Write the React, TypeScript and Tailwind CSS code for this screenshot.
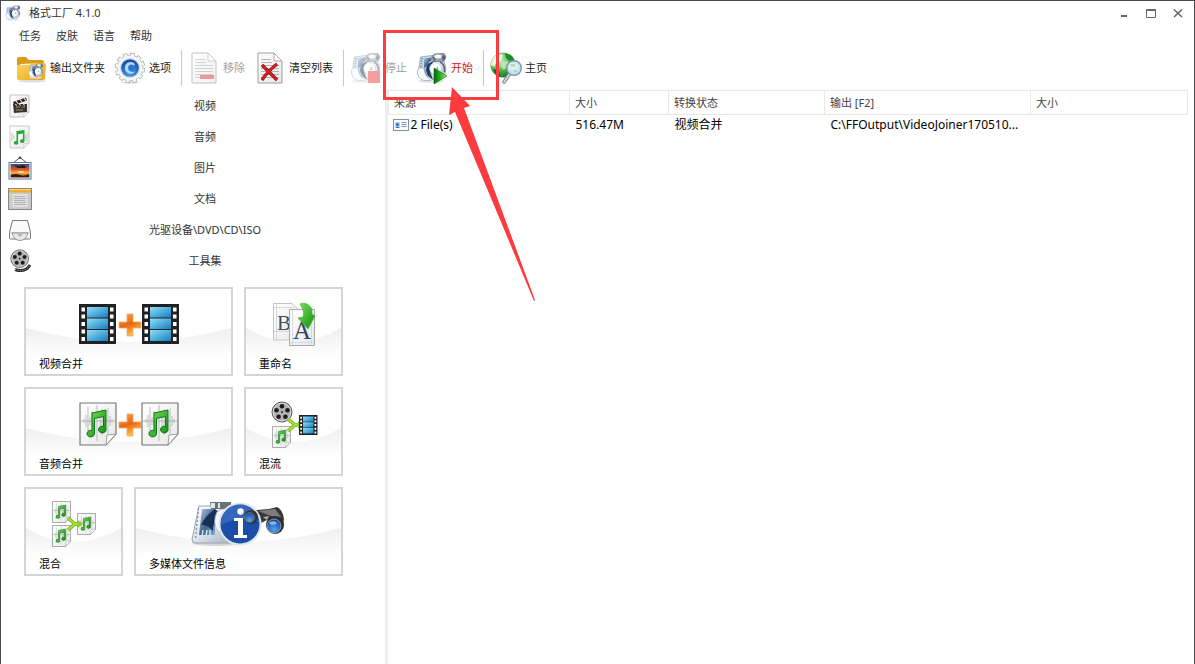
import React from "react";

interface IconProps {
  className?: string;
}

interface PartProps {
  transform?: string;
}

// gradients used by several icons, rendered once per page
function SharedDefs() {
  return (
    <svg className="absolute h-0 w-0" aria-hidden="true">
      <defs>
        <linearGradient id="filmBlue" x1="0" y1="0" x2="1" y2="1">
          <stop offset="0" stopColor="#9adcf5" />
          <stop offset="0.5" stopColor="#4eb0dd" />
          <stop offset="1" stopColor="#1a7db8" />
        </linearGradient>
        <linearGradient id="orange" x1="0" y1="0" x2="0.4" y2="1">
          <stop offset="0" stopColor="#f9a45c" />
          <stop offset="0.45" stopColor="#ee7420" />
          <stop offset="0.55" stopColor="#e8650f" />
          <stop offset="1" stopColor="#fbc04a" />
        </linearGradient>
        <linearGradient id="paper" x1="0" y1="0" x2="1" y2="1">
          <stop offset="0" stopColor="#ffffff" />
          <stop offset="1" stopColor="#e8e8e8" />
        </linearGradient>
        <linearGradient id="green" x1="0" y1="0" x2="1" y2="1">
          <stop offset="0" stopColor="#7be05a" />
          <stop offset="1" stopColor="#118a12" />
        </linearGradient>
        <linearGradient id="play" x1="0" y1="0" x2="1" y2="0">
          <stop offset="0" stopColor="#04660a" />
          <stop offset="0.5" stopColor="#27b526" />
          <stop offset="1" stopColor="#a4ec7c" />
        </linearGradient>
        <linearGradient id="folder" x1="0" y1="0" x2="1" y2="1">
          <stop offset="0" stopColor="#ffd75e" />
          <stop offset="1" stopColor="#e9a51b" />
        </linearGradient>
        <linearGradient id="metal" x1="0" y1="0" x2="1" y2="1">
          <stop offset="0" stopColor="#ffffff" />
          <stop offset="0.5" stopColor="#dce3ea" />
          <stop offset="1" stopColor="#a3afbd" />
        </linearGradient>
        <linearGradient id="steel" x1="0" y1="0" x2="1" y2="1">
          <stop offset="0" stopColor="#b4cbe4" />
          <stop offset="0.55" stopColor="#3f6490" />
          <stop offset="1" stopColor="#8eadd0" />
        </linearGradient>
        <radialGradient id="blueBall" cx="0.5" cy="0.75" r="0.7">
          <stop offset="0" stopColor="#4fa5f0" />
          <stop offset="1" stopColor="#134a9f" />
        </radialGradient>
        <radialGradient id="globe" cx="0.35" cy="0.3" r="0.8">
          <stop offset="0" stopColor="#e0fad6" />
          <stop offset="0.5" stopColor="#52b850" />
          <stop offset="1" stopColor="#0c6a1f" />
        </radialGradient>
        <radialGradient id="lens" cx="0.4" cy="0.4" r="0.7">
          <stop offset="0" stopColor="#ffffff" />
          <stop offset="1" stopColor="#a5d6ea" />
        </radialGradient>
        <linearGradient id="sunset" x1="0" y1="0" x2="0" y2="1">
          <stop offset="0" stopColor="#3a4c80" />
          <stop offset="0.4" stopColor="#e0512a" />
          <stop offset="0.65" stopColor="#ffb53a" />
          <stop offset="1" stopColor="#7a2418" />
        </linearGradient>
        <linearGradient id="wave" x1="0" y1="0" x2="0" y2="1">
          <stop offset="0" stopColor="#efefef" />
          <stop offset="0.3" stopColor="#f6f6f6" />
          <stop offset="0.6" stopColor="#ffffff" />
        </linearGradient>
      </defs>
    </svg>
  );
}

/* ---------- shared drawing parts ---------- */

// 32x32
function Machine({ transform }: PartProps) {
  return (
    <g transform={transform}>
      <ellipse cx="15" cy="29" rx="13" ry="1.8" fill="#e1e4e8" />
      {/* film frame behind */}
      <path d="M4.500 5 L16 3.500 L18 24 L8 26 L2 22Z" fill="#c9d6e4" stroke="#97a5b5" strokeWidth="0.8" />
      <path d="M6 6 L4.500 18" stroke="#6f8094" strokeWidth="1.4" strokeDasharray="1.3 1.3" />
      <path d="M8 6.500 L15.500 5.500 L15.500 12 L8 16Z" fill="url(#steel)" />
      {/* housing */}
      <path d="M13 10 Q20 6 28 9.500 Q31 15 29 22 Q24 28 16 27Z" fill="url(#metal)" stroke="#8a98a8" strokeWidth="0.8" />
      <path d="M24 10 Q29 12 28.500 20" fill="none" stroke="#55677c" strokeWidth="1.6" />
      <path d="M1.500 18 Q5 14 8 17 Q9 24 15 28.500 H8 Q1 27 1.500 18Z" fill="#f7f9fb" stroke="#a2aebb" strokeWidth="0.8" />
      {/* dark blade */}
      <path d="M18.500 8.500 Q11 11 10 17 Q10 24 17 27.500 Q14 22 14 18 Q14.500 13 18.500 8.500Z" fill="#1f3c62" />
      <path d="M9 15 Q8 20 12 25" fill="none" stroke="#7f9cbd" strokeWidth="1.2" />
      {/* disc */}
      <circle cx="19.500" cy="16.500" r="5.800" fill="#ffffff" stroke="#c3ccd5" strokeWidth="0.7" />
      <path d="M19 18 L22 14 L22.500 18Z" fill="#8fb3a4" />
      {/* camera head */}
      <path d="M16 4 L19 2 L28 1.500 L30 5 L28 9 L18 9.500Z" fill="#9aa6b2" stroke="#5f6c79" strokeWidth="0.8" />
      <ellipse cx="22" cy="4.500" rx="3.500" ry="1.900" fill="#f2f5f8" />
      <ellipse cx="27.500" cy="5.500" rx="1.500" ry="2.500" fill="#4f5e6e" />
      <path d="M17.500 5 L19 8.500" stroke="#4f5e6e" strokeWidth="1.200" />
    </g>
  );
}

// 38x43
function Film({ transform }: PartProps) {
  const holes = [3.5, 10.5, 18, 25.5, 33];
  return (
    <g transform={transform}>
      <rect width="37" height="40" fill="#1f2123" />
      <rect x="8" y="3" width="21" height="10.5" fill="url(#filmBlue)" />
      <rect x="8" y="14.5" width="21" height="10.5" fill="url(#filmBlue)" />
      <rect x="8" y="26" width="21" height="11" fill="url(#filmBlue)" />
      {holes.map((y) => (
        <g key={y} fill="#fff">
          <rect x="2.5" y={y} width="3.5" height="4" />
          <rect x="31" y={y} width="3.5" height="4" />
        </g>
      ))}
    </g>
  );
}

function Plus({ transform }: PartProps) {
  return (
    <path
      transform={transform}
      d="M8 0 h6 v8 h8 v6 h-8 v8 h-6 v-8 h-8 v-6 h8z"
      fill="url(#orange)"
      stroke="#f3a76a"
      strokeWidth="0.8"
    />
  );
}

// 38x44
function MusicDoc({ transform }: PartProps) {
  return (
    <g transform={transform}>
      <path d="M1 1 H37 V32 L27 43 H1Z" fill="url(#paper)" stroke="#777" strokeWidth="1.2" />
      <path
        d="M5 17v4M7 13v12M9 5v29M11 15v8M13 9v18M15 12v14M18 3v36M21 13v13M23 7v26M26 10v19M29 6v26M31 14v10M33 17v4"
        stroke="#bcbcbc"
        strokeWidth="1"
      />
      <path d="M2 19 H36" stroke="#aaa" strokeWidth="0.8" />
      <path d="M37 32 L27 43 L28 33Z" fill="#fff" stroke="#888" strokeWidth="0.8" />
      <path
        d="M13 11 L27 8 V27 A3.800 3.300 0 1 1 24.500 24.500 V14.500 L15.500 16.500 V31 A3.800 3.300 0 1 1 13 28.500Z"
        fill="url(#green)"
        stroke="#0b7714"
        strokeWidth="1"
      />
    </g>
  );
}

// 24x24
function Reel({ transform }: PartProps) {
  return (
    <g transform={transform}>
      <circle cx="11" cy="11" r="10" fill="#b4b4b4" stroke="#5a5a5a" strokeWidth="1" />
      <circle cx="11" cy="11" r="8.8" fill="none" stroke="#dedede" strokeWidth="0.8" />
      <g fill="#1c1c1c">
        <circle cx="11" cy="5.2" r="2.3" />
        <circle cx="16.5" cy="9.2" r="2.3" />
        <circle cx="14.4" cy="15.7" r="2.3" />
        <circle cx="7.6" cy="15.7" r="2.3" />
        <circle cx="5.5" cy="9.2" r="2.3" />
        <circle cx="11" cy="11" r="1" />
      </g>
    </g>
  );
}

function MergeArrow({ transform }: PartProps) {
  return (
    <g transform={transform}>
      <path d="M1 1 L8 7 L13 7 M8 7 L1 13" fill="none" stroke="#6cae12" strokeWidth="3.6" />
      <path d="M1 1 L8 7 L13 7 M8 7 L1 13" fill="none" stroke="#a6dc3c" strokeWidth="2.2" />
      <path d="M11 3 L16 7 L11 11Z" fill="#8ccc26" />
    </g>
  );
}

/* ---------- toolbar icons ---------- */

function FolderIcon({ className }: IconProps) {
  return (
    <svg className={className} viewBox="0 0 32 32">
      <ellipse cx="17" cy="29" rx="14" ry="1.5" fill="#ddd" />
      <path d="M2 7 q0-2 2-2 h7 l3 3 h13 q2 0 2 2 v15 q0 2-2 2 H4 q-2 0-2-2z" fill="#dd9c17" />
      <path d="M5 12 l23-1 v4 H5z" fill="#fff6d8" />
      <path d="M2 13 h12 l3-2 h12 q2 0 2 2 l-1 13 q0 2-2 2 H4 q-2 0-2-2z" fill="url(#folder)" />
      <Machine transform="translate(13 11) scale(0.5)" />
    </svg>
  );
}

function GearIcon({ className }: IconProps) {
  return (
    <svg className={className} viewBox="0 0 32 32">
      <ellipse cx="16" cy="30.5" rx="9" ry="1.2" fill="#ddd" />
      <circle cx="16" cy="16" r="13.6" fill="none" stroke="#999ea3" strokeWidth="3.2" strokeDasharray="4.200 2.903" />
      <circle cx="16" cy="16" r="13" fill="#f6f6f6" stroke="#a9adb1" strokeWidth="0.8" />
      <circle cx="16" cy="16" r="13.4" fill="none" stroke="#f6f6f6" strokeWidth="2.4" strokeDasharray="3.200 3.816" strokeDashoffset="-0.500" />
      <circle cx="16" cy="16" r="9.5" fill="#dbe6f2" stroke="#b0bfd0" strokeWidth="0.6" />
      <circle cx="16" cy="16" r="8.8" fill="url(#blueBall)" />
      <path
        d="M20 11 Q14 8.500 11.500 13 Q9.500 18 14 21 Q18 23 21 19.500 Q17 21 14.700 18.500 Q12.800 15.500 15.500 13 Q18 11.500 20.500 14 Q21 12 20 11Z"
        fill="#b7d9f8"
      />
      <circle cx="17.800" cy="16" r="2.600" fill="#2877cf" />
    </svg>
  );
}

function PageBase() {
  return (
    <g>
      <path d="M4 1 H20 L28 9 V31 H4Z" fill="url(#paper)" stroke="#9d9d9d" strokeWidth="1" />
      <path d="M20 1 V9 H28Z" fill="#fff" stroke="#9d9d9d" strokeWidth="0.8" />
      <path
        d="M7 7.5H17M7 10.5H18M7 13.5H25M7 16.5H25M7 19.5H25M7 22.5H25M7 25.5H25"
        stroke="#b5b5b5"
        strokeWidth="1"
      />
    </g>
  );
}

function RemoveIcon({ className }: IconProps) {
  return (
    <svg className={className} viewBox="0 0 32 32">
      <g opacity="0.6">
        <PageBase />
        <rect x="12" y="23" width="14" height="4" fill="#de5555" />
      </g>
    </svg>
  );
}

function ClearIcon({ className }: IconProps) {
  return (
    <svg className={className} viewBox="0 0 32 32">
      <PageBase />
      <path d="M8 13 L23 28 M23 12 Q14 19 8 28" fill="none" stroke="#8e0a10" strokeWidth="3.2" />
      <path d="M8 13 L23 28 M23 12 Q14 19 8 28" fill="none" stroke="#d3222a" strokeWidth="2" />
    </svg>
  );
}

function StopIcon({ className }: IconProps) {
  return (
    <svg className={className} viewBox="0 0 32 32">
      <g opacity="0.5">
        <Machine />
        <rect x="18" y="19" width="12" height="12" fill="#ee3d3d" />
      </g>
    </svg>
  );
}

function StartIcon({ className }: IconProps) {
  return (
    <svg className={className} viewBox="0 0 32 32">
      <Machine />
      <path d="M18 16 L31 24 L18 32Z" fill="url(#play)" stroke="#0b6b10" strokeWidth="0.6" />
    </svg>
  );
}

function HomeIcon({ className }: IconProps) {
  return (
    <svg className={className} viewBox="0 0 32 32">
      <circle cx="13" cy="13" r="12.5" fill="url(#globe)" />
      <path d="M5 4 Q10 1 13 3 L11 8 L7 10 L4 15 L1 13 Q1 8 5 4Z" fill="#f1fbed" opacity="0.9" />
      <path d="M15 1 L22 4 L25 9 L20 9 L16 6Z" fill="#1c8a32" />
      <path d="M12 10 L18 9 L19 13 L14 18 L11 15Z" fill="#c5eeb9" opacity="0.8" />
      <path d="M3 17 L9 18 L10 25 Q5 23 3 17Z" fill="#0d6a1f" />
      <path d="M19.500 22 L14 30" stroke="#73808c" strokeWidth="3.6" strokeLinecap="round" />
      <path d="M19.500 22 L14 30" stroke="#d3dae0" strokeWidth="1.8" strokeLinecap="round" />
      <circle cx="24" cy="16" r="7.3" fill="url(#lens)" fillOpacity="0.95" stroke="#7e95a5" strokeWidth="1.4" />
      <path d="M20 12 h5 v3 h-4z M23 18 h4 v2 h-3z" fill="#8fd09a" opacity="0.6" />
    </svg>
  );
}

/* ---------- category icons (24x24) ---------- */

function VideoIcon({ className }: IconProps) {
  return (
    <svg className={className} viewBox="0 0 24 24">
      <path d="M2 1 H21 V18 L16 23 H2Z" fill="url(#paper)" stroke="#c4c4c4" strokeWidth="1" />
      <path d="M5 8 L18 3.500 L19 6.500 L6 11Z" fill="#2c2521" />
      <path d="M8 7 l2 2.500 M12 5.500 l2 2.500 M16 4.200 l2 2.500" stroke="#ddd" strokeWidth="1.2" />
      <path d="M5 10 H19 V18 L6 19Z" fill="#3d342e" />
      <path d="M8 13h4M8 16h7M14 13h3" stroke="#9b8b7c" strokeWidth="1" />
      <path d="M7 10 l2 1.500 M11 10 l2 1.500 M15 10 l2 1.500" stroke="#ddd" strokeWidth="1" />
      <path d="M21 18 L16 23 L16 19Z" fill="#fff" stroke="#bbb" strokeWidth="0.6" />
    </svg>
  );
}

function AudioIcon({ className }: IconProps) {
  return (
    <svg className={className} viewBox="0 0 24 24">
      <path d="M2 1 H21 V18 L16 23 H2Z" fill="url(#paper)" stroke="#c8c8c8" strokeWidth="1" />
      <path d="M4 8v8M6 10v4M17.500 10v4M19 8v8" stroke="#c9c9c9" strokeWidth="1" />
      <path
        d="M8.500 6 L16.500 5 V16 A2.200 1.900 0 1 1 14.900 14.300 V8.500 L10.100 9.200 V17.500 A2.200 1.900 0 1 1 8.500 16Z"
        fill="#25a935"
      />
      <path d="M21 18 L16 23 L16 19Z" fill="#fff" stroke="#bbb" strokeWidth="0.6" />
    </svg>
  );
}

function PictureIcon({ className }: IconProps) {
  return (
    <svg className={className} viewBox="0 0 24 24">
      <path d="M5 7 L12 1.500 L19 7" fill="none" stroke="#555" strokeWidth="1" />
      <circle cx="12" cy="1.700" r="1.200" fill="#444" />
      <rect x="1" y="6.500" width="22" height="16.500" fill="#f4f8fb" stroke="#4e7a9e" strokeWidth="1" />
      <rect x="2.500" y="8" width="19" height="13.500" fill="url(#sunset)" />
      <path d="M5 9 l6 1 l4-1 l4 2 l-3 1 l-6 0z" fill="#191c30" />
      <path d="M3 19 q5-2 9 0 t9-1 v3 H3z" fill="#3a1616" />
      <path d="M10.500 16 h5" stroke="#fff3a2" strokeWidth="1.6" />
    </svg>
  );
}

function DocumentIcon({ className }: IconProps) {
  return (
    <svg className={className} viewBox="0 0 24 24">
      <rect x="0.500" y="1.500" width="23" height="21" fill="#c9ccce" stroke="#858585" strokeWidth="1" />
      <rect x="1" y="2" width="22" height="3.500" fill="#f1ae2e" />
      <path d="M1 2.500h22" stroke="#ffd676" strokeWidth="1" />
      <rect x="4.500" y="7" width="15" height="13" fill="#e0e0e0" />
      <path d="M6 9.500h11M6 11.500h12M6 13.500h11M6 15.500h12M6 17.500h12" stroke="#adadad" strokeWidth="0.900" />
    </svg>
  );
}

function DriveIcon({ className }: IconProps) {
  return (
    <svg className={className} viewBox="0 0 24 24">
      <path
        d="M4.500 2.500 H19.500 L22.500 14 V20 Q22.500 21 21.500 21 H2.500 Q1.500 21 1.500 20 V14Z"
        fill="#fafafa"
        stroke="#777"
        strokeWidth="1"
      />
      <path d="M1.500 14.500 H22.500" stroke="#c5c5c5" strokeWidth="0.800" />
      <path d="M4 15 H20 Q18 22.500 12 22.500 Q6 22.500 4 15Z" fill="#e8e8e8" stroke="#8b8b8b" strokeWidth="0.900" />
      <path d="M9.500 15.500 H14.500 Q14 18.500 12 18.500 Q10 18.500 9.500 15.500Z" fill="#b5b5b5" />
    </svg>
  );
}

function ToolsetIcon({ className }: IconProps) {
  return (
    <svg className={className} viewBox="0 0 24 24">
      <path d="M7 20.500 Q17 24 22 16" fill="none" stroke="#2c2c2c" strokeWidth="3" />
      <path d="M7 20.500 Q17 24 22 16" fill="none" stroke="#bbb" strokeWidth="1" strokeDasharray="1 1.500" />
      <Reel transform="translate(2 0) scale(0.88)" />
    </svg>
  );
}

/* ---------- tile pictures ---------- */

function VideoJoinArt() {
  return (
    <svg className="h-12 w-[102px]" viewBox="0 0 102 48">
      <Film transform="translate(1 4)" />
      <Plus transform="translate(41 14)" />
      <Film transform="translate(64 4)" />
    </svg>
  );
}

function AudioJoinArt() {
  return (
    <svg className="h-12 w-[102px]" viewBox="0 0 102 48">
      <MusicDoc transform="translate(1 2)" />
      <Plus transform="translate(41 14)" />
      <MusicDoc transform="translate(63 2)" />
    </svg>
  );
}

function RenameArt() {
  return (
    <svg className="h-12 w-12" viewBox="0 0 48 48">
      <path d="M3.500 3.500 H22 L28 9 V40 H3.500Z" fill="url(#paper)" stroke="#c4c4c4" strokeWidth="1" />
      <path d="M6.500 4 V40 M4 7.500 H24 M4 31.500 H24" stroke="#d9d9d9" strokeWidth="1" />
      <text x="7" y="30" fontSize="21" fontFamily="Liberation Serif, serif" fill="#3e5266">
        B
      </text>
      <path d="M19.500 9.500 H44.500 V45.500 H19.500Z" fill="url(#paper)" stroke="#a9a9a9" strokeWidth="1" />
      <path d="M22.500 10 V45 M41.500 10 V45 M20 42.500 H44" stroke="#dadada" strokeWidth="1" />
      <text x="23" y="39" fontSize="25" fontFamily="Liberation Serif, serif" fill="#33475b">
        A
      </text>
      <path
        d="M30 4 Q37 1 42 9 L42 14 L45 16 L38 29 L28 18 L33 17 Q35 11 30 4Z"
        fill="url(#green)"
        stroke="#4fc040"
        strokeWidth="0.800"
      />
    </svg>
  );
}

function MuxArt() {
  return (
    <svg className="h-12 w-12" viewBox="0 0 48 48">
      <Reel transform="translate(1 1)" />
      <MusicDoc transform="translate(2 26) scale(0.5)" />
      <MergeArrow transform="translate(17 18)" />
      <Film transform="translate(29 15) scale(0.5)" />
    </svg>
  );
}

function MixArt() {
  return (
    <svg className="h-12 w-12" viewBox="0 0 48 48">
      <MusicDoc transform="translate(2 1) scale(0.5)" />
      <MusicDoc transform="translate(2 25) scale(0.5)" />
      <MusicDoc transform="translate(27 13) scale(0.5)" />
      <MergeArrow transform="translate(17 17)" />
    </svg>
  );
}

function MediaInfoArt() {
  return (
    <svg className="h-12 w-24" viewBox="0 0 96 48">
      <ellipse cx="26" cy="43" rx="25" ry="3" fill="#d5d5d5" />
      <path
        d="M8 6 H38 L44 40 Q44 43 40 43 H5 Q1 43 1 39 L3 30Z"
        fill="url(#metal)"
        stroke="#9aa4ae"
        strokeWidth="1"
      />
      <path d="M11 9 H24 V35 H8Z" fill="url(#steel)" />
      <path d="M7.500 8 L4.500 38" stroke="#8c98a4" strokeWidth="1.500" strokeDasharray="2 2" />
      <path d="M24 9 Q14 16 10 25 Q16 24 22 31 Q21 22 30 14Z" fill="#18305a" />
      <path d="M11 36 l1-6 M15 36 l1-6 M19 36 v-6" stroke="#d6e6f5" strokeWidth="1.400" />
      <path d="M19 2 H40 V9 H20Z" fill="#69727b" />
      <path d="M20 3 h4 v5 h-4z M27 3 h2 v5 h-2z" fill="#e3e8ec" />
      <path d="M26 12 Q34 6 40 12 V36 L27 31 Q21 22 26 12Z" fill="#f6f8fa" stroke="#b4bdc6" strokeWidth="0.800" />
      {/* binoculars */}
      <path d="M58 12 Q60 9 66 10 L78 9 L86 7 Q92 10 93 19 L91 29 L86 31 L76 20 L66 25Z" fill="#383838" />
      <path d="M67 11 L84 9 L90 17 L80 16Z" fill="#7d7d7d" />
      <path d="M72 17 L78 16 L76 20Z" fill="#aaa" />
      <circle cx="49" cy="24" r="20.500" fill="#1c4da8" stroke="#dfe5ee" strokeWidth="2" />
      <path d="M30 25 A19 19 0 0 1 68 22 Q49 15 30 25Z" fill="#4d7fd0" opacity="0.5" />
      <circle cx="49.500" cy="11.500" r="3.200" fill="#fff" />
      <path d="M43 18 H52 V35 H56 V38 H43 V35 H47 V21 H43Z" fill="#fff" />
      <circle cx="60" cy="17" r="7" fill="#343434" />
      <circle cx="58.500" cy="17.500" r="4.800" fill="url(#blueBall)" stroke="#999" strokeWidth="0.600" />
      <circle cx="84" cy="25" r="9" fill="#2d2d2d" />
      <circle cx="83" cy="26" r="7" fill="url(#blueBall)" stroke="#aaa" strokeWidth="0.800" />
      <ellipse cx="82" cy="23" rx="3.500" ry="1.800" fill="#9bc9f5" opacity="0.8" />
    </svg>
  );
}

/* ---------- data ---------- */

const MENUS = ["任务", "皮肤", "语言", "帮助"];

interface ToolItem {
  label: string;
  Icon: React.FC<IconProps>;
  disabled?: boolean;
  active?: boolean;
}

const TOOL_GROUPS: ToolItem[][] = [
  [
    { label: "输出文件夹", Icon: FolderIcon },
    { label: "选项", Icon: GearIcon },
  ],
  [
    { label: "移除", Icon: RemoveIcon, disabled: true },
    { label: "清空列表", Icon: ClearIcon },
  ],
  [
    { label: "停止", Icon: StopIcon, disabled: true },
    { label: "开始", Icon: StartIcon, active: true },
  ],
  [{ label: "主页", Icon: HomeIcon }],
];

const CATEGORIES: ToolItem[] = [
  { label: "视频", Icon: VideoIcon },
  { label: "音频", Icon: AudioIcon },
  { label: "图片", Icon: PictureIcon },
  { label: "文档", Icon: DocumentIcon },
  { label: "光驱设备\\DVD\\CD\\ISO", Icon: DriveIcon },
  { label: "工具集", Icon: ToolsetIcon },
];

const TILES = [
  { label: "视频合并", Art: VideoJoinArt, wide: true },
  { label: "重命名", Art: RenameArt, wide: false },
  { label: "音频合并", Art: AudioJoinArt, wide: true },
  { label: "混流", Art: MuxArt, wide: false },
  { label: "混合", Art: MixArt, wide: false },
  { label: "多媒体文件信息", Art: MediaInfoArt, wide: true },
];

/* ---------- layout ---------- */

function TitleBar() {
  return (
    <header className="flex h-6 items-center pl-1 pr-[10px]">
      <svg className="h-4 w-4" viewBox="0 0 32 32">
        <Machine />
      </svg>
      <h1 className="ml-2 flex-1">格式工厂 4.1.0</h1>
      <div className="flex items-center gap-[15px] text-[#666]">
        <button type="button" aria-label="最小化">
          <svg className="h-3 w-3" viewBox="0 0 12 12">
            <path d="M3 9 H9" stroke="currentColor" strokeWidth="2" />
          </svg>
        </button>
        <button type="button" aria-label="最大化">
          <svg className="h-3 w-3" viewBox="0 0 12 12">
            <path d="M1.500 2.500 H10.500 V10.500 H1.500Z M1.500 3.500 H10.500" fill="none" stroke="currentColor" />
          </svg>
        </button>
        <button type="button" aria-label="关闭">
          <svg className="h-3 w-3" viewBox="0 0 12 12">
            <path d="M2 2.500 L10 10 M10 2.500 L2 10" stroke="currentColor" strokeWidth="1.600" />
          </svg>
        </button>
      </div>
    </header>
  );
}

function ToolButton({ label, Icon, disabled, active }: ToolItem) {
  const color = disabled ? "text-[#a0a0a0]" : active ? "text-[#c8231c]" : "text-[#222]";
  return (
    <button type="button" disabled={disabled} className={`flex items-center gap-[3px] ${color}`}>
      <Icon className="h-8 w-8" />
      {label}
    </button>
  );
}

function Toolbar() {
  return (
    <div className="mt-[3px] flex h-9 pl-2">
      {TOOL_GROUPS.map((group, i) => (
        <div
          key={i}
          className="flex items-center gap-[9px] border-r border-[#c8c8c8] pl-[6px] pr-[10px] last:border-r-0"
        >
          {group.map((item) => (
            <ToolButton key={item.label} {...item} />
          ))}
        </div>
      ))}
    </div>
  );
}

function Tile({ label, Art, wide }: (typeof TILES)[number]) {
  return (
    <button
      type="button"
      className={`relative flex h-[89px] flex-col items-start border-2 border-[#d5d5d5] bg-white pt-[11px] text-black ${
        wide ? "col-span-2" : ""
      }`}
    >
      <svg className="absolute inset-0 h-full w-full" viewBox="0 0 100 85" preserveAspectRatio="none">
        <path d="M0 39 Q50 67 100 39 V85 H0Z" fill="url(#wave)" />
      </svg>
      <span className="relative flex w-full justify-center">
        <Art />
      </span>
      <span className="relative mt-2 pl-[13px] leading-4">{label}</span>
    </button>
  );
}

function Sidebar() {
  return (
    <aside className="w-[387px] shrink-0 border-r-3 border-[#eee]">
      <nav>
        {CATEGORIES.map(({ label, Icon }) => (
          <button key={label} type="button" className="flex h-[31px] w-full items-center px-[7px]">
            <Icon className="h-6 w-6" />
            <span className="flex-1">{label}</span>
          </button>
        ))}
      </nav>
      <div className="mt-[11px] grid grid-cols-[repeat(3,99px)] gap-[11px] pl-[23px]">
        {TILES.map((tile) => (
          <Tile key={tile.label} {...tile} />
        ))}
      </div>
    </aside>
  );
}

function TaskTable() {
  return (
    <main className="min-w-0 flex-1 pr-[6px]">
      <table className="w-full table-fixed border-collapse text-left">
        <colgroup>
          <col className="w-[181px]" />
          <col className="w-[99px]" />
          <col className="w-[156px]" />
          <col className="w-[206px]" />
          <col />
        </colgroup>
        <thead>
          <tr className="h-6 text-[#444]">
            {["来源", "大小", "转换状态", "输出 [F2]", "大小"].map((title, i) => (
              <th key={i} className="border border-[#e8e8e8] pl-[5px] font-normal">
                {title}
              </th>
            ))}
          </tr>
        </thead>
        <tbody className="text-xs text-black">
          <tr className="h-5">
            <td className="pl-1">
              <span className="flex items-center gap-[2px]">
                <svg className="h-4 w-4" viewBox="0 0 16 16">
                  <rect x="0.500" y="2.500" width="15" height="11" fill="#f7fafd" stroke="#7d93aa" />
                  <rect x="2" y="5" width="5" height="6" fill="#b9d6f0" />
                  <circle cx="4.500" cy="7.500" r="1.500" fill="#2f6db5" />
                  <path d="M2.500 11 q2-3 4 0z" fill="#2f6db5" />
                  <path d="M8.500 5.500h5M8.500 7.500h5M8.500 9.500h5" stroke="#8b9aaa" />
                </svg>
                2 File(s)
              </span>
            </td>
            <td className="pl-[6px]">516.47M</td>
            <td className="pl-[6px]">视频合并</td>
            <td className="whitespace-nowrap pl-[6px]">C:\FFOutput\VideoJoiner170510...</td>
            <td />
          </tr>
        </tbody>
      </table>
    </main>
  );
}

// red box and arrow pointing at the start button
function StartCallout() {
  return (
    <svg className="pointer-events-none absolute left-[380px] top-[28px] h-[275px] w-[156px]" viewBox="381 29 156 275">
      <rect x="384.500" y="31.500" width="113" height="67" fill="none" stroke="#fb3b3d" strokeWidth="3" />
      <path d="M452 87 L470 106 L464 108 L535 300 L534 301 L455 112 L449 115Z" fill="#fb3b3d" />
    </svg>
  );
}

export default function App() {
  return (
    <div className="relative flex min-h-screen flex-col border-x border-t border-[#4a4a4a] bg-white font-['Noto_Sans','Noto_Sans_CJK_SC',sans-serif] text-[11px] leading-4 text-[#333]">
      <SharedDefs />
      <TitleBar />
      <nav className="flex h-[22px] items-center gap-[15px] pl-[18px]">
        {MENUS.map((menu) => (
          <button key={menu} type="button">
            {menu}
          </button>
        ))}
      </nav>
      <Toolbar />
      <div className="mt-1 flex flex-1">
        <Sidebar />
        <TaskTable />
      </div>
      <StartCallout />
    </div>
  );
}
